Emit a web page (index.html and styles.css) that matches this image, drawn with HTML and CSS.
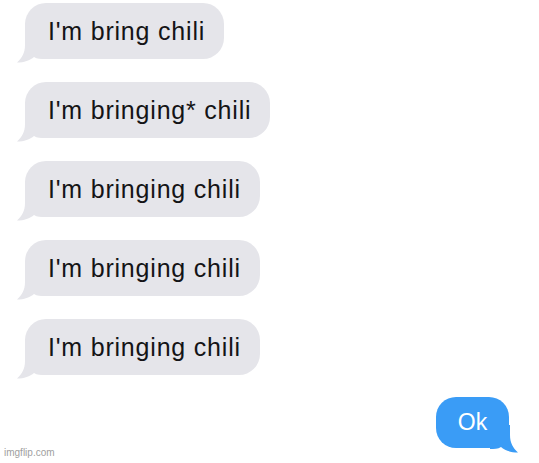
FILE: index.html
```html
<!DOCTYPE html>
<html>
<head>
<meta charset="utf-8">
<link rel="stylesheet" href="styles.css">
</head>
<body>
<div class="thread">
  <div class="bubble in">I'm bring chili<svg class="tail" viewBox="0 0 28 28" width="28" height="28"><path d="M8,0 L8,10 C8,18 5,23 0,27.5 C7,27.5 13,25.5 17,22 C20,24 24,24 28,24 L28,0 Z"/></svg></div>
  <div class="bubble in">I'm bringing* chili<svg class="tail" viewBox="0 0 28 28" width="28" height="28"><path d="M8,0 L8,10 C8,18 5,23 0,27.5 C7,27.5 13,25.5 17,22 C20,24 24,24 28,24 L28,0 Z"/></svg></div>
  <div class="bubble in">I'm bringing chili<svg class="tail" viewBox="0 0 28 28" width="28" height="28"><path d="M8,0 L8,10 C8,18 5,23 0,27.5 C7,27.5 13,25.5 17,22 C20,24 24,24 28,24 L28,0 Z"/></svg></div>
  <div class="bubble in">I'm bringing chili<svg class="tail" viewBox="0 0 28 28" width="28" height="28"><path d="M8,0 L8,10 C8,18 5,23 0,27.5 C7,27.5 13,25.5 17,22 C20,24 24,24 28,24 L28,0 Z"/></svg></div>
  <div class="bubble in">I'm bringing chili<svg class="tail" viewBox="0 0 28 28" width="28" height="28"><path d="M8,0 L8,10 C8,18 5,23 0,27.5 C7,27.5 13,25.5 17,22 C20,24 24,24 28,24 L28,0 Z"/></svg></div>
  <div class="bubble out">Ok<svg class="tail" viewBox="0 0 28 28" width="28" height="28"><path d="M20,0 L20,10 C20,18 23,23 28,27.5 C21,27.5 15,25.5 11,22 C8,24 4,24 0,24 L0,0 Z"/></svg></div>
</div>
<div class="watermark">imgflip.com</div>
</body>
</html>
```
FILE: styles.css
```css
html, body {
  margin: 0;
  padding: 0;
  background: #ffffff;
}
body {
  width: 539px;
  height: 463px;
  position: relative;
  overflow: hidden;
  font-family: "Liberation Sans", Arial, sans-serif;
}
.thread {
  display: flex;
  flex-direction: column;
  gap: 23px;
  padding: 3px 30px 0 25px;
}
.bubble {
  position: relative;
  height: 56px;
  border-radius: 21px;
  display: flex;
  align-items: center;
  font-size: 25px;
  letter-spacing: 0.8px;
  white-space: nowrap;
}
.bubble.in {
  align-self: flex-start;
  background: #e5e5ea;
  color: #141416;
  padding: 0 19px 0 23px;
}
.bubble.in .tail {
  position: absolute;
  left: -8px;
  bottom: -4px;
  fill: #e5e5ea;
}
.bubble.out {
  align-self: flex-end;
  margin-top: -1px;
  height: 51px;
  width: 73px;
  justify-content: center;
  background: #3a9cf6;
  color: #ffffff;
  font-size: 23px;
  letter-spacing: 0;
  border-radius: 20px;
}
.bubble.out .tail {
  position: absolute;
  right: -9px;
  bottom: -5px;
  fill: #3a9cf6;
}
.watermark {
  position: absolute;
  left: 4px;
  top: 447px;
  font-size: 10px;
  color: #a0a0a0;
  letter-spacing: 0;
}
```
